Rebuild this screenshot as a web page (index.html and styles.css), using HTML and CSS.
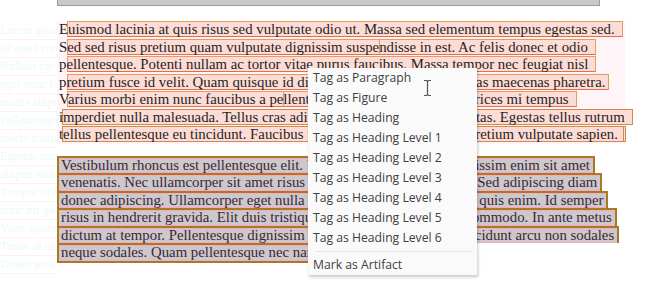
FILE: index.html
```html
<!DOCTYPE html>
<html lang="en">

<head>
    <meta charset="UTF-8">
    <title>Tag editor</title>
    <link rel="stylesheet" href="styles.css">
</head>

<body>
    <div class="toolbar-edge"></div>
    <div class="doc">
        <div class="ghost">
            <p>Lorem ipsum dolor</p>
            <p>sit amet consect</p>
            <p>Nullam eget felis</p>
            <p>eget nunc lobortis</p>
            <p>mattis aliquam fa</p>
            <p>Pellentesque habi</p>
            <p>morbi tristique sen</p>
            <p>Egestas integer eget</p>
            <p>aliquet nibh prae</p>
            <p>Tempor id eu nisl</p>
            <p>nunc mi ipsum fau</p>
            <p>Vitae sapien pelle</p>
            <p>Tortor at risus vive</p>
            <p>Donec pretium vulp</p>
        </div>
        <div class="page">
            <div class="para para-light">
                <div class="line"><span class="hl">Euismod lacinia at quis risus sed vulputate odio ut. Massa sed elementum tempus egestas sed.</span></div>
                <div class="line"><span class="hl">Sed sed risus pretium quam vulputate dignissim suspe</span><span class="hl cut">ndisse in est. Ac felis donec et odio</span></div>
                <div class="line"><span class="hl">pellentesque. Potenti nullam ac tortor vitae purus faucibus. Massa tempor nec feugiat nisl</span></div>
                <div class="line"><span class="hl short">pretium fusce id velit. Quam quisque id diam vel quam element. Egestas maecenas pharetra.</span></div>
                <div class="line"><span class="hl">Varius morbi enim nunc faucibus a pe</span><span class="hl cut">llentesque sit amet, porttitor. Ultrices mi tempus</span></div>
                <div class="line"><span class="hl wide">imperdiet nulla malesuada. Tellus cras adipiscing enim, eu turpis, egestas. Egestas tellus rutrum</span></div>
                <div class="line"><span class="hl wide end">tellus pellentesque eu tincidunt. Faucibus turpis, in eu mi bibendum. Pretium vulputate sapien.</span></div>
            </div>
            <div class="para para-dark">
                <div class="bline">Vestibulum rhoncus est pellentesque elit. Ullamcorper a lacus mi dignissim enim sit amet</div>
                <div class="bline">venenatis. Nec ullamcorper sit amet risus nullam eget felis egets duis. Sed adipiscing diam</div>
                <div class="bline">donec adipiscing. Ullamcorper eget nulla facilis etiam dignissim diam quis enim. Id semper</div>
                <div class="bline">risus in hendrerit gravida. Elit duis tristique solicitudin nibh at amet commodo. In ante metus</div>
                <div class="bline">dictum at tempor. Pellentesque dignissim enim sit amet venenatis. Tincidunt arcu non sodales</div>
                <div class="bline last">neque sodales. Quam pellentesque nec nam aliquam sem</div>
            </div>
        </div>
    </div>

    <ul class="menu">
        <li>Tag as Paragraph</li>
        <li>Tag as Figure</li>
        <li>Tag as Heading</li>
        <li>Tag as Heading Level 1</li>
        <li>Tag as Heading Level 2</li>
        <li>Tag as Heading Level 3</li>
        <li>Tag as Heading Level 4</li>
        <li>Tag as Heading Level 5</li>
        <li>Tag as Heading Level 6</li>
        <li class="sep"></li>
        <li>Mark as Artifact</li>
    </ul>

    <svg class="ibeam" width="9" height="18" viewBox="0 0 9 18">
        <path d="M1 1.5h2.5l1 1 1-1H8M4.5 2.5v13M1 16.5h2.5l1-1 1 1H8" fill="none" stroke="#555" stroke-width="1.2"/>
    </svg>
</body>

</html>
```

FILE: styles.css
```css
body {
    margin: 0;
    background: #fff;
    position: relative;
    overflow: hidden;
    height: 285px;
}

.toolbar-edge {
    width: 541px;
    height: 5px;
    margin-left: 57px;
    background: #c9c9c9;
    border: 1px solid #9a9a9a;
    border-top: none;
}

.doc {
    display: flex;
}

.ghost {
    width: 57px;
    flex: none;
    overflow: hidden;
    padding-top: 16px;
    font-family: "Liberation Serif", serif;
    font-size: 12px;
    color: #eef9fb;
    white-space: nowrap;
}

.ghost p {
    margin: 0;
    height: 17px;
    line-height: 17px;
    border-bottom: 1px solid #fff0f6;
}

.page {
    font-family: "Liberation Serif", serif;
    font-size: 14.8px;
    color: #1f1f1f;
    white-space: nowrap;
}

.para-light {
    isolation: isolate;
    width: 568px;
    margin-top: 15px;
    background: #fff4f8;
}

.line {
    height: 17.5px;
    line-height: 17.5px;
    padding-left: 2px;
}

.hl {
    position: relative;
}

.hl::before {
    content: "";
    position: absolute;
    z-index: -1;
    left: 8px;
    right: -8px;
    top: 0;
    bottom: 0;
    background: #fddcd5;
    border-top: 1px solid #dca063;
    border-left: 1px solid #dca063;
    border-right: 1px solid #dca063;
    border-bottom: 1px solid #ee6a4a;
}

.hl.short::before {
    right: -4px;
}

.hl.cut::before {
    left: 0;
}

.hl.wide::before {
    left: 3px;
    border-color: #d08a4a;
}

.hl.end::before {
    right: -8px;
    border-right: 3px double #d08a4a;
}

.para-dark {
    margin-top: 12px;
    color: #3b2738;
}

.bline {
    width: fit-content;
    height: 17.5px;
    line-height: 15px;
    padding: 0 3px 0 2px;
    box-sizing: border-box;
    background: #cdc8cb;
    border: 2px solid #a77b1f;
    border-bottom: none;
    box-shadow: inset 0 1px 0 #f7a8c4, inset 0 -1px 0 #f7a8c4;
}

.bline.last {
    height: 19.5px;
    border-bottom: 2px solid #a77b1f;
}

.menu {
    position: absolute;
    left: 308px;
    top: 68px;
    width: 169px;
    margin: 0;
    padding: 0;
    list-style: none;
    background: #fafafa;
    box-shadow: 1px 2px 3px rgba(0, 0, 0, 0.22);
    font-family: "Open Sans", sans-serif;
    font-size: 12.2px;
    color: #404040;
}

.menu li {
    height: 20px;
    line-height: 20px;
    padding-left: 5px;
}

.menu li.sep {
    height: 0;
    margin: 3px 4px 3px 8px;
    border-top: 1px solid #e4e4e4;
}

.ibeam {
    position: absolute;
    left: 423px;
    top: 79px;
}
```
